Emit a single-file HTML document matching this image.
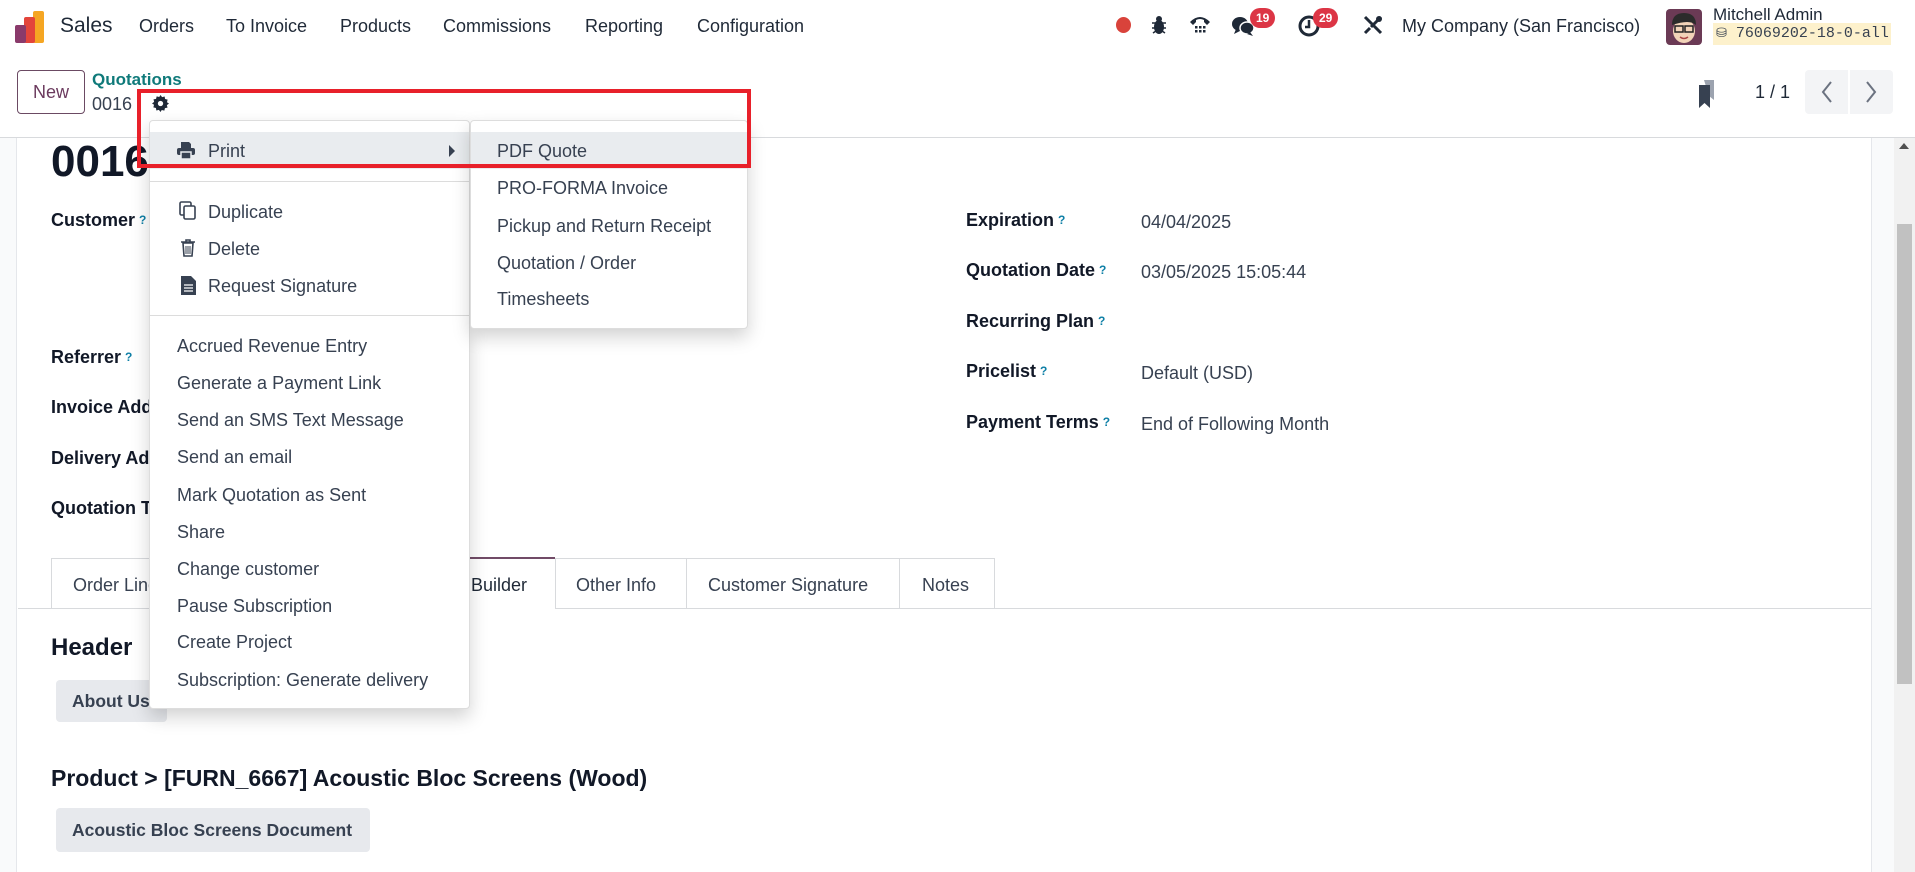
<!DOCTYPE html>
<html><head><meta charset="utf-8"><style>
*{box-sizing:border-box;margin:0;padding:0}
body{width:1915px;height:872px;overflow:hidden;background:#fff;font-family:"Liberation Sans",sans-serif;color:#374151;position:relative}
.a{position:absolute;white-space:nowrap;line-height:22px}
.nav{font-size:18px;color:#1f2937}
.lbl{font-size:18px;font-weight:bold;color:#111827}
.val{font-size:18px;color:#374151}
.q{color:#0e7fa6;font-size:12px;font-weight:bold;vertical-align:top;margin-left:4px}
.dd{position:absolute;background:#fff;border:1px solid #ddd;border-radius:4px;box-shadow:0 8px 18px rgba(0,0,0,.18)}
.mi{font-size:18px;color:#374151}
.badge{position:absolute;background:#dc3545;color:#fff;font-size:12px;font-weight:bold;border-radius:10px;height:20px;line-height:20px;padding:0 6px}
</style></head><body>
<svg class="a" style="left:15px;top:11px" width="30" height="32" viewBox="0 0 30 32"><rect x="18" y="0" width="11" height="32" fill="#f5a623" rx="2"/><rect x="9" y="6" width="11" height="26" fill="#e3453b" rx="2"/><rect x="0" y="14" width="11" height="18" fill="#8a3a6b" rx="2"/></svg>
<div class="a nav" style="left:60px;top:15px;font-size:21px">Sales</div>
<div class="a nav" style="left:139px;top:15px">Orders</div>
<div class="a nav" style="left:226px;top:15px">To Invoice</div>
<div class="a nav" style="left:340px;top:15px">Products</div>
<div class="a nav" style="left:443px;top:15px">Commissions</div>
<div class="a nav" style="left:585px;top:15px">Reporting</div>
<div class="a nav" style="left:697px;top:15px">Configuration</div>
<div class="a" style="left:1116px;top:17px;width:15px;height:16px;border-radius:50%;background:#d9433b"></div>
<svg class="a" style="left:1151px;top:15px" width="16" height="20" viewBox="0 0 16 20"><ellipse cx="8" cy="12" rx="5" ry="7" fill="#1f2937"/><circle cx="8" cy="4" r="3" fill="#1f2937"/><path d="M1 8h14M1 13h14M2 18l3-2M14 18l-3-2" stroke="#1f2937" stroke-width="1.5"/></svg>
<svg class="a" style="left:1188px;top:14px" width="24" height="22" viewBox="0 0 24 22"><path d="M2 8q10-10 20 0l-3 3-3-3v-2q-4-2-8 0v2l-3 3z" fill="#1f2937"/><g fill="#1f2937"><rect x="7" y="12" width="2.5" height="2.5"/><rect x="11" y="12" width="2.5" height="2.5"/><rect x="15" y="12" width="2.5" height="2.5"/><rect x="7" y="16" width="2.5" height="2.5"/><rect x="11" y="16" width="2.5" height="2.5"/><rect x="15" y="16" width="2.5" height="2.5"/></g></svg>
<svg class="a" style="left:1231px;top:15px" width="24" height="22" viewBox="0 0 24 22"><ellipse cx="9" cy="9" rx="8" ry="7" fill="#1f2937"/><path d="M5 14l-2 5 6-3z" fill="#1f2937"/><ellipse cx="16" cy="13" rx="7" ry="6" fill="#1f2937" stroke="#fff" stroke-width="1.5"/><path d="M19 17l3 4-6-2z" fill="#1f2937"/></svg>
<div class="badge" style="left:1250px;top:8px">19</div>
<svg class="a" style="left:1297px;top:14px" width="24" height="24" viewBox="0 0 24 24"><circle cx="12" cy="12" r="9" fill="none" stroke="#1f2937" stroke-width="3"/><path d="M12 6v7h-4" stroke="#1f2937" stroke-width="2.5" fill="none"/></svg>
<div class="badge" style="left:1313px;top:8px">29</div>
<svg class="a" style="left:1362px;top:14px" width="22" height="22" viewBox="0 0 22 22"><path d="M3 3l16 16M19 3L9 13M3 19l5-5" stroke="#1f2937" stroke-width="3"/><circle cx="17" cy="5" r="3" fill="#1f2937"/></svg>
<div class="a nav" style="left:1402px;top:15px">My Company (San Francisco)</div>
<svg class="a" style="left:1666px;top:9px" width="36" height="36" viewBox="0 0 36 36"><rect width="36" height="36" rx="4" fill="#6b3a55"/><ellipse cx="18" cy="22" rx="11" ry="12" fill="#f2d3b8"/><path d="M6 16q0-12 12-12t12 12q-6-6-24 0z" fill="#2b2b2b"/><rect x="9" y="17" width="8" height="6" fill="none" stroke="#222" stroke-width="1.5"/><rect x="19" y="17" width="8" height="6" fill="none" stroke="#222" stroke-width="1.5"/><path d="M14 28q4 3 8 0" stroke="#a44" stroke-width="1.5" fill="none"/></svg>
<div class="a" style="left:1713px;top:4px;font-size:17px;color:#1f2937">Mitchell Admin</div>
<div class="a" style="left:1713px;top:23px;height:22px;width:178px;background:#fdf1cc;font-family:'Liberation Mono',monospace;font-size:15px;color:#374151;padding-left:3px"><span style="font-family:'DejaVu Sans',sans-serif;font-size:13px">&#9921;</span> 76069202-18-0-all</div>
<div class="a" style="left:17px;top:70px;width:68px;height:44px;border:1px solid #6b4a63;border-radius:4px;font-size:18px;color:#6b3a5e;text-align:center;line-height:42px">New</div>
<div class="a" style="left:92px;top:69px;font-size:17px;font-weight:bold;color:#0f7a7a">Quotations</div>
<div class="a" style="left:92px;top:93px;font-size:18px;color:#374151">0016</div>
<svg class="a" style="left:152px;top:95px" width="17" height="17" viewBox="0 0 16 16"><path fill="#1f2937" d="M8 0l1.5 2 2.4-.6.4 2.4 2.4.6-.6 2.4L16 8l-2 1.5.6 2.4-2.4.4-.6 2.4-2.4-.6L8 16l-1.5-2-2.4.6-.4-2.4-2.4-.6.6-2.4L0 8l2-1.5-.6-2.4 2.4-.4.6-2.4 2.4.6z"/><circle cx="8" cy="8" r="2.5" fill="#fff"/></svg>
<svg class="a" style="left:1697px;top:80px" width="22" height="28" viewBox="0 0 22 28"><path d="M7 0h10v20l-5-4z" fill="#9ca3af"/><path d="M2 5h11v23l-5.5-5-5.5 5z" fill="#374151"/></svg>
<div class="a" style="left:1755px;top:81px;font-size:18px;color:#1f2937">1 / 1</div>
<div class="a" style="left:1805px;top:70px;width:43px;height:44px;background:#f3f4f6;border-radius:4px 0 0 4px"></div>
<div class="a" style="left:1850px;top:70px;width:43px;height:44px;background:#f3f4f6;border-radius:0 4px 4px 0"></div>
<svg class="a" style="left:1820px;top:80px" width="14" height="24"><path d="M11 2L3 12l8 10" stroke="#6b7280" stroke-width="2" fill="none"/></svg>
<svg class="a" style="left:1864px;top:80px" width="14" height="24"><path d="M3 2l8 10-8 10" stroke="#6b7280" stroke-width="2" fill="none"/></svg>
<div class="a" style="left:0;top:137px;width:1915px;height:1px;background:#d8dadd"></div>
<div class="a" style="left:0;top:138px;width:17px;height:734px;background:#f9fafb;border-right:1px solid #e5e7eb"></div>
<div class="a" style="left:1871px;top:138px;width:23px;height:734px;background:#f9fafb;border-left:1px solid #e5e7eb"></div>
<div class="a" style="left:1894px;top:138px;width:21px;height:734px;background:#f1f1f1"></div>
<div class="a" style="left:1897px;top:224px;width:15px;height:460px;background:#c1c1c1"></div>
<div class="a" style="left:1899px;top:143px;width:0;height:0;border-left:5px solid transparent;border-right:5px solid transparent;border-bottom:6px solid #505050"></div>
<div class="a" style="left:51px;top:137px;font-size:44px;font-weight:bold;color:#111827;line-height:50px">0016</div>
<div class="a lbl" style="left:51px;top:209px">Customer<span class="q">?</span></div>
<div class="a lbl" style="left:51px;top:346px">Referrer<span class="q">?</span></div>
<div class="a lbl" style="left:51px;top:396px">Invoice Address</div>
<div class="a lbl" style="left:51px;top:447px">Delivery Address</div>
<div class="a lbl" style="left:51px;top:497px">Quotation Template</div>
<div class="a lbl" style="left:966px;top:209px">Expiration<span class="q">?</span></div>
<div class="a val" style="left:1141px;top:211px">04/04/2025</div>
<div class="a lbl" style="left:966px;top:259px">Quotation Date<span class="q">?</span></div>
<div class="a val" style="left:1141px;top:261px">03/05/2025 15:05:44</div>
<div class="a lbl" style="left:966px;top:310px">Recurring Plan<span class="q">?</span></div>
<div class="a lbl" style="left:966px;top:360px">Pricelist<span class="q">?</span></div>
<div class="a val" style="left:1141px;top:362px">Default (USD)</div>
<div class="a lbl" style="left:966px;top:411px">Payment Terms<span class="q">?</span></div>
<div class="a val" style="left:1141px;top:413px">End of Following Month</div>
<div class="a" style="left:18px;top:608px;width:1853px;height:1px;background:#d8dadd"></div>
<div class="a" style="left:51px;top:558px;width:944px;height:51px;border:1px solid #d8dadd;border-bottom:none"></div>
<div class="a" style="left:555px;top:558px;width:1px;height:51px;background:#d8dadd"></div>
<div class="a" style="left:320px;top:557px;width:235px;height:2px;background:#714b67"></div>
<div class="a" style="left:686px;top:558px;width:1px;height:51px;background:#d8dadd"></div>
<div class="a" style="left:899px;top:558px;width:1px;height:51px;background:#d8dadd"></div>
<div class="a" style="left:320px;top:559px;width:235px;height:50px;background:#fff"></div>
<div class="a val" style="left:73px;top:574px">Order Lines</div>
<div class="a val" style="left:471px;top:574px;color:#1f2937">Builder</div>
<div class="a val" style="left:576px;top:574px">Other Info</div>
<div class="a val" style="left:708px;top:574px">Customer Signature</div>
<div class="a val" style="left:922px;top:574px">Notes</div>
<div class="a" style="left:51px;top:634px;font-size:24px;font-weight:bold;color:#111827;line-height:28px">Header</div>
<div class="a" style="left:56px;top:680px;width:111px;height:42px;background:#e7e9ed;border-radius:4px;font-size:17.5px;font-weight:bold;color:#374151;line-height:42px;padding-left:16px">About Us</div>
<div class="a" style="left:51px;top:764px;font-size:23px;font-weight:bold;color:#111827;line-height:28px">Product &gt; [FURN_6667] Acoustic Bloc Screens (Wood)</div>
<div class="a" style="left:56px;top:808px;width:314px;height:44px;background:#e7e9ed;border-radius:4px;font-size:17.5px;font-weight:bold;color:#374151;line-height:44px;padding-left:16px">Acoustic Bloc Screens Document</div>
<div class="dd" style="left:149px;top:120px;width:321px;height:589px"></div>
<div class="a" style="left:150px;top:132px;width:319px;height:37px;background:#e9ecef"></div>
<svg class="a" style="left:177px;top:142px" width="18" height="17" viewBox="0 0 18 17"><path d="M4 0h8l2 2v4H4z" fill="#374151"/><rect x="0" y="6" width="18" height="7" rx="2" fill="#374151"/><rect x="4" y="10" width="10" height="7" fill="#374151" stroke="#e9ecef" stroke-width="1.5"/></svg>
<div class="a mi" style="left:208px;top:140px">Print</div>
<div class="a" style="left:449px;top:145px;width:0;height:0;border-top:6px solid transparent;border-bottom:6px solid transparent;border-left:6px solid #374151"></div>
<div class="a" style="left:150px;top:181px;width:319px;height:1px;background:#dcdcdc"></div>
<svg class="a" style="left:179px;top:201px" width="18" height="19" viewBox="0 0 18 19"><rect x="1" y="1" width="11" height="13" rx="1.5" fill="none" stroke="#374151" stroke-width="1.6"/><rect x="5" y="5" width="11" height="13" rx="1.5" fill="#fff" stroke="#374151" stroke-width="1.6"/></svg>
<div class="a mi" style="left:208px;top:201px">Duplicate</div>
<svg class="a" style="left:181px;top:239px" width="14" height="18" viewBox="0 0 14 18"><path d="M0 3h14M5 3V1h4v2" stroke="#374151" stroke-width="1.6" fill="none"/><path d="M2 4h10l-1 13H3z" fill="none" stroke="#374151" stroke-width="1.6"/><path d="M5 7v8M7 7v8M9 7v8" stroke="#374151"/></svg>
<div class="a mi" style="left:208px;top:238px">Delete</div>
<svg class="a" style="left:181px;top:276px" width="15" height="19" viewBox="0 0 15 19"><path d="M0 0h10l5 5v14H0z" fill="#374151"/><path d="M3 9h9M3 12h9M3 15h9" stroke="#fff" stroke-width="1.3"/></svg>
<div class="a mi" style="left:208px;top:275px">Request Signature</div>
<div class="a" style="left:150px;top:315px;width:319px;height:1px;background:#dcdcdc"></div>
<div class="a mi" style="left:177px;top:335px">Accrued Revenue Entry</div>
<div class="a mi" style="left:177px;top:372px">Generate a Payment Link</div>
<div class="a mi" style="left:177px;top:409px">Send an SMS Text Message</div>
<div class="a mi" style="left:177px;top:446px">Send an email</div>
<div class="a mi" style="left:177px;top:484px">Mark Quotation as Sent</div>
<div class="a mi" style="left:177px;top:521px">Share</div>
<div class="a mi" style="left:177px;top:558px">Change customer</div>
<div class="a mi" style="left:177px;top:595px">Pause Subscription</div>
<div class="a mi" style="left:177px;top:631px">Create Project</div>
<div class="a mi" style="left:177px;top:669px">Subscription: Generate delivery</div>
<div class="dd" style="left:470px;top:120px;width:278px;height:209px"></div>
<div class="a" style="left:471px;top:132px;width:276px;height:37px;background:#e9ecef"></div>
<div class="a mi" style="left:497px;top:140px">PDF Quote</div>
<div class="a mi" style="left:497px;top:177px">PRO-FORMA Invoice</div>
<div class="a mi" style="left:497px;top:215px">Pickup and Return Receipt</div>
<div class="a mi" style="left:497px;top:252px">Quotation / Order</div>
<div class="a mi" style="left:497px;top:288px">Timesheets</div>
<div class="a" style="left:137px;top:89px;width:614px;height:79px;border:4px solid #e8202a"></div>
</body></html>
